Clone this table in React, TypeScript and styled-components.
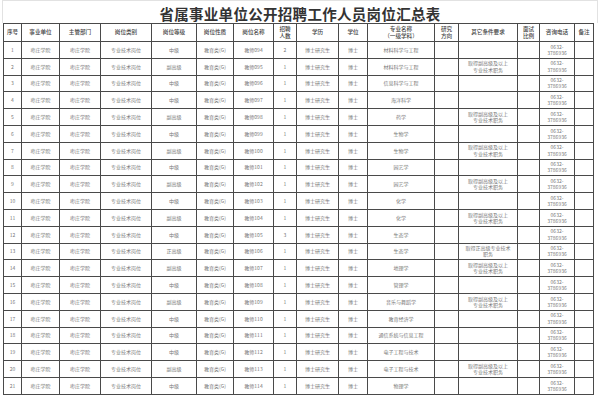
import React from 'react';
import styled, { createGlobalStyle } from 'styled-components';

const GlobalStyle = createGlobalStyle`
  html, body {
    margin: 0;
    padding: 0;
    background: #ffffff;
  }
  body {
    font-family: "Liberation Serif", "Noto Sans CJK SC", serif;
  }
`;

const COLS = [18, 38, 41, 51, 45, 37, 40, 23, 42, 29, 67, 24, 59, 22, 35, 19];

const Page = styled.div`
  width: 600px;
  height: 400px;
  padding: 0 3px;
  box-sizing: border-box;
  overflow: hidden;
`;

const TitleBar = styled.div`
  height: 23px;
  display: flex;
  align-items: center;
  justify-content: center;
  border: 1px solid #e2e2e2;
  border-bottom: none;
  box-sizing: border-box;
  margin: 0 -1px;
`;

const Title = styled.h1`
  margin: 0;
  padding-top: 2px;
  font-family: "Noto Sans CJK SC", "Liberation Serif", serif;
  font-size: 14.5px;
  font-weight: 600;
  letter-spacing: 0.3px;
  color: #333;
`;

const Grid = styled.div`
  display: grid;
  grid-template-columns: ${COLS.map((w) => `${w}px`).join(' ')};
  grid-template-rows: 18px repeat(21, 16.8px);
  border-left: 1px solid #4a4a4a;
  border-top: 1px solid #4a4a4a;
  width: 591px;
  box-sizing: border-box;
`;

const Cell = styled.div<{ $head?: boolean }>`
  box-sizing: border-box;
  border-right: 1px solid #4a4a4a;
  border-bottom: 1px solid #4a4a4a;
  display: flex;
  flex-direction: column;
  align-items: center;
  justify-content: center;
  text-align: center;
  overflow: hidden;
  white-space: nowrap;
  font-family: "Noto Sans CJK SC", sans-serif;
  font-size: ${({ $head }) => ($head ? '5.6px' : '5px')};
  font-weight: ${({ $head }) => ($head ? 500 : 400)};
  line-height: 1.25;
  color: ${({ $head }) => ($head ? '#444' : '#777')};
`;

const HEAD: string[][] = [
  ['序号'],
  ['事业单位'],
  ['主管部门'],
  ['岗位类别'],
  ['岗位等级'],
  ['岗位性质'],
  ['岗位名称'],
  ['招聘', '人数'],
  ['学历'],
  ['学位'],
  ['专业名称', '（一级学科）'],
  ['研究', '方向'],
  ['其它条件要求'],
  ['面试', '比例'],
  ['咨询电话'],
  ['备注'],
];

const LEVELS = ['中级', '副高级', '中级', '中级', '副高级', '中级', '副高级', '中级', '副高级', '中级', '副高级', '中级', '正高级', '副高级', '中级', '副高级', '中级', '中级', '中级', '副高级', '中级'];
const MAJORS = ['材料科学与工程', '材料科学与工程', '信息科学与工程', '海洋科学', '药学', '生物学', '生物学', '园艺学', '园艺学', '化学', '化学', '生态学', '生态学', '地理学', '管理学', '音乐与舞蹈学', '教育经济学', '通信系统与信息工程', '电子工程与技术', '电子工程与技术', '物理学'];
const COUNTS = ['2', '1', '1', '1', '1', '1', '1', '1', '1', '1', '1', '3', '1', '1', '1', '1', '1', '1', '1', '1', '1'];
const COND: Record<number, string[]> = {
  2: ['取得副高级及以上', '专业技术职务'],
  5: ['取得副高级及以上', '专业技术职务'],
  7: ['取得副高级及以上', '专业技术职务'],
  9: ['取得副高级及以上', '专业技术职务'],
  11: ['取得副高级及以上', '专业技术职务'],
  13: ['取得正高级专业技术', '职务'],
  14: ['取得副高级及以上', '专业技术职务'],
  16: ['取得副高级及以上', '专业技术职务'],
  20: ['取得副高级及以上', '专业技术职务'],
};

const rows = LEVELS.map((level, i) => {
  const n = i + 1;
  return [
    [String(n)],
    ['枣庄学院'],
    ['枣庄学院'],
    ['专业技术岗位'],
    [level],
    ['教育类(G)'],
    [`教师${String(93 + n).padStart(3, '0')}`],
    [COUNTS[i]],
    ['博士研究生'],
    ['博士'],
    [MAJORS[i]],
    [''],
    COND[n] ?? [''],
    [''],
    ['0632-', '3786936'],
    [''],
  ];
});

const Lines: React.FC<{ lines: string[] }> = ({ lines }) => (
  <>
    {lines.map((l, i) => (
      <span key={i}>{l}</span>
    ))}
  </>
);

export default function App() {
  return (
    <Page>
      <GlobalStyle />
      <TitleBar>
        <Title>省属事业单位公开招聘工作人员岗位汇总表</Title>
      </TitleBar>
      <Grid>
        {HEAD.map((h, i) => (
          <Cell key={`h${i}`} $head>
            <Lines lines={h} />
          </Cell>
        ))}
        {rows.map((r, ri) =>
          r.map((c, ci) => (
            <Cell key={`${ri}-${ci}`}>
              <Lines lines={c} />
            </Cell>
          ))
        )}
      </Grid>
    </Page>
  );
}
